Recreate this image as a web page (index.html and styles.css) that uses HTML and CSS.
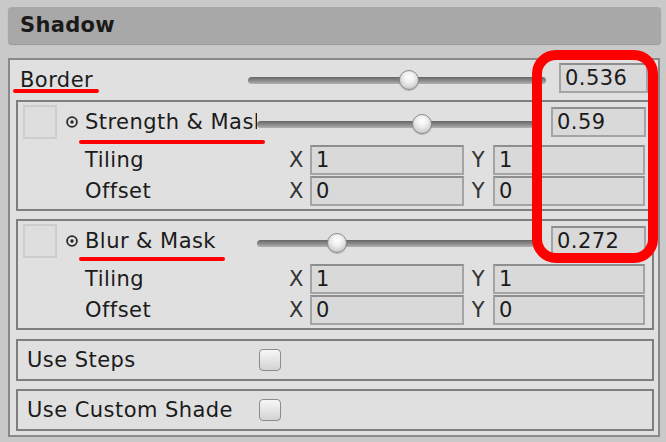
FILE: index.html
```html
<!DOCTYPE html>
<html>
<head>
<meta charset="utf-8">
<link rel="stylesheet" href="styles.css">
</head>
<body>
<div class="header">Shadow</div>
<div class="panel">
  <div class="row-main">
    <span class="label-main">Border</span>
    <div class="slider slider-main"><div class="track"></div><div class="thumb" style="left:54%"></div></div>
    <div class="field value value-main">0.536</div>
  </div>

  <div class="group group-first">
    <div class="group-head">
      <div class="thumbnail"></div>
      <svg class="dot-icon" viewBox="0 0 12 12"><circle cx="6" cy="6" r="4.9" fill="none" stroke="#2a2a2a" stroke-width="1.8"/><circle cx="6" cy="6" r="1.7" fill="#2a2a2a"/></svg>
      <span class="group-title">Strength &amp; Mask</span>
      <div class="slider slider-group"><div class="track"></div><div class="thumb" style="left:58.3%"></div></div>
      <div class="field value">0.59</div>
    </div>
    <div class="vec-row vec-first">
      <span class="vec-label">Tiling</span><span class="axis">X</span><div class="field">1</div><span class="axis axis-y">Y</span><div class="field">1</div>
    </div>
    <div class="vec-row">
      <span class="vec-label">Offset</span><span class="axis">X</span><div class="field">0</div><span class="axis axis-y">Y</span><div class="field">0</div>
    </div>
  </div>

  <div class="group group-second">
    <div class="group-head">
      <div class="thumbnail"></div>
      <svg class="dot-icon" viewBox="0 0 12 12"><circle cx="6" cy="6" r="4.9" fill="none" stroke="#2a2a2a" stroke-width="1.8"/><circle cx="6" cy="6" r="1.7" fill="#2a2a2a"/></svg>
      <span class="group-title">Blur &amp; Mask</span>
      <div class="slider slider-group"><div class="track"></div><div class="thumb" style="left:28.3%"></div></div>
      <div class="field value">0.272</div>
    </div>
    <div class="vec-row vec-first">
      <span class="vec-label">Tiling</span><span class="axis">X</span><div class="field">1</div><span class="axis axis-y">Y</span><div class="field">1</div>
    </div>
    <div class="vec-row">
      <span class="vec-label">Offset</span><span class="axis">X</span><div class="field">0</div><span class="axis axis-y">Y</span><div class="field">0</div>
    </div>
  </div>

  <div class="toggle toggle-first">
    <span class="toggle-label">Use Steps</span>
    <div class="checkbox"></div>
  </div>
  <div class="toggle">
    <span class="toggle-label">Use Custom Shade</span>
    <div class="checkbox"></div>
  </div>
</div>

<div class="mark mark-border"></div>
<div class="mark mark-strength"></div>
<div class="mark mark-blur"></div>
<div class="mark-frame"></div>
</body>
</html>
```

FILE: styles.css
```css
* {
  box-sizing: border-box;
}

body {
  margin: 0;
  width: 666px;
  height: 442px;
  position: relative;
  overflow: hidden;
  background: #c9c9c9;
  font-family: "DejaVu Sans", "Noto Sans", sans-serif;
  font-size: 21px;
  letter-spacing: 0.45px;
  color: #1b1b1b;
}

.header {
  margin: 7px 5px 0 8px;
  height: 37px;
  background: #a8a8a8;
  border-radius: 4px;
  box-shadow: 0 1px 1px rgba(0, 0, 0, 0.25);
  padding-left: 12px;
  font-weight: bold;
  font-size: 21px;
  letter-spacing: 0.3px;
  line-height: 37px;
  color: #1a1a1a;
}

.panel {
  margin: 14px 0 0 8px;
  width: 652px;
  height: 379px;
  background: #e0e0e0;
  border: 2px solid #8a8a8a;
  padding: 3px 4px 4px 6px;
  display: flex;
  flex-direction: column;
}

.row-main {
  display: flex;
  align-items: center;
  height: 30px;
  padding-left: 4px;
  margin-bottom: 7px;
  flex: none;
}

.label-main {
  width: 228px;
  padding-top: 3px;
  flex: none;
}

.slider {
  position: relative;
  height: 20px;
  margin-top: 3px;
  flex: none;
}

.track {
  position: absolute;
  left: 0;
  right: 0;
  top: 7px;
  height: 7px;
  border-radius: 3.5px;
  background: linear-gradient(#666666, #8c8c8c 55%, #b2b2b2);
}

.thumb {
  position: absolute;
  top: 0;
  width: 20px;
  height: 20px;
  margin-left: -10px;
  border-radius: 50%;
  border: 1px solid #8a8a8a;
  background: radial-gradient(circle at 50% 35%, #ffffff 0, #f0f0f0 35%, #c8c8c8 80%, #a9a9a9 100%);
  box-shadow: 0 1px 1px rgba(0, 0, 0, 0.2);
}

.slider-main {
  width: 298px;
}

.slider-group {
  width: 283px;
}

.field {
  height: 30px;
  background: #d9d9d9;
  border: 2px solid #a4a4a4;
  border-top-color: #8e8e8e;
  padding-left: 4px;
  line-height: 26px;
  white-space: nowrap;
  overflow: hidden;
}

.value {
  width: 95px;
  margin-left: 11px;
  flex: none;
}

.value-main {
  width: 89px;
  margin-left: 13px;
}

.group {
  height: 111px;
  border: 2px solid #7e7e7e;
  padding: 3px 0 0 5px;
  display: flex;
  flex-direction: column;
  flex: none;
}

.group-first {
  margin-bottom: 8px;
}

.group-second {
  margin-bottom: 9px;
}

.group-head {
  display: flex;
  align-items: center;
  height: 34px;
}

.thumbnail {
  width: 34px;
  height: 34px;
  background: #dedede;
  border: 2px solid #cdcdcd;
  flex: none;
}

.dot-icon {
  width: 12px;
  height: 12px;
  margin-left: 9px;
  flex: none;
}

.group-title {
  width: 172px;
  margin-left: 7px;
  white-space: nowrap;
  overflow: hidden;
  flex: none;
}

.vec-row {
  display: grid;
  grid-template-columns: 204px 21px 154px 29px 152px;
  align-items: center;
  height: 30px;
  padding-left: 62px;
  margin-top: 1px;
}

.vec-first {
  margin-top: 6px;
}

.axis {
  color: #333;
}

.axis-y {
  text-align: center;
}

.toggle {
  height: 42px;
  border: 2px solid #7e7e7e;
  display: flex;
  align-items: center;
  padding-left: 9px;
  flex: none;
}

.toggle-first {
  margin-bottom: 8px;
}

.toggle-label {
  width: 232px;
  flex: none;
}

.checkbox {
  width: 22px;
  height: 22px;
  border: 1px solid #8c8c8c;
  border-radius: 4px;
  background: linear-gradient(#f7f7f7, #d3d3d3);
}

.mark {
  position: absolute;
  height: 4px;
  background: #ff0000;
  border-radius: 2px;
}

.mark-border {
  left: 13px;
  top: 89px;
  width: 86px;
}

.mark-strength {
  left: 79px;
  top: 140px;
  width: 186px;
}

.mark-blur {
  left: 79px;
  top: 257px;
  width: 146px;
}

.mark-frame {
  position: absolute;
  left: 532px;
  top: 50px;
  width: 126px;
  height: 213px;
  border: 10px solid #ff0000;
  border-radius: 24px;
}
```
